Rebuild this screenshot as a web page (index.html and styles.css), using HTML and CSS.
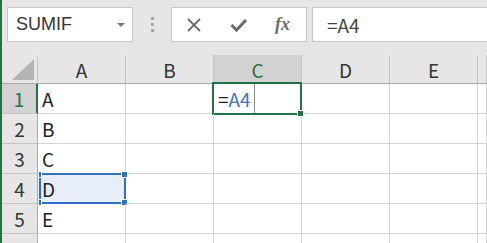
FILE: index.html
```html
<!DOCTYPE html>
<html lang="ja">
<head>
  <meta charset="UTF-8">
  <title>Sheet</title>
  <link rel="stylesheet" href="styles.css">
</head>
<body>
  <div class="app">
    <div class="toolbar">
      <div class="namebox">
        <span>SUMIF</span>
        <span class="caret"></span>
      </div>
      <div class="grip"><i></i><i></i><i></i></div>
      <div class="fbuttons">
        <svg width="16" height="16" viewBox="0 0 16 16"><path d="M2 2 L14 14 M14 2 L2 14" stroke="#6b6b6b" stroke-width="1.8" fill="none"/></svg>
        <svg width="18" height="16" viewBox="0 0 18 16"><path d="M1.5 8 L6.5 13 L16 3" stroke="#6b6b6b" stroke-width="3" fill="none"/></svg>
        <span class="fx">fx</span>
      </div>
      <div class="fbar">=A4</div>
    </div>

    <div class="sheet">
      <div class="hd corner"><span class="tri"></span></div>
      <div class="hd col">A</div>
      <div class="hd col">B</div>
      <div class="hd col on">C</div>
      <div class="hd col">D</div>
      <div class="hd col">E</div>
      <div class="hd col"></div>

      <div class="hd row on">1</div>
      <div class="cell">A</div>
      <div class="cell"></div>
      <div class="cell active"><span>=</span><span class="ref">A4</span><span class="cursor"></span><i class="fill"></i></div>
      <div class="cell"></div>
      <div class="cell"></div>
      <div class="cell"></div>

      <div class="hd row">2</div>
      <div class="cell">B</div>
      <div class="cell"></div>
      <div class="cell"></div>
      <div class="cell"></div>
      <div class="cell"></div>
      <div class="cell"></div>

      <div class="hd row">3</div>
      <div class="cell">C</div>
      <div class="cell"></div>
      <div class="cell"></div>
      <div class="cell"></div>
      <div class="cell"></div>
      <div class="cell"></div>

      <div class="hd row">4</div>
      <div class="cell picked">D<span class="sel"><i class="h tl"></i><i class="h tr"></i><i class="h bl"></i><i class="h br"></i></span></div>
      <div class="cell"></div>
      <div class="cell"></div>
      <div class="cell"></div>
      <div class="cell"></div>
      <div class="cell"></div>

      <div class="hd row">5</div>
      <div class="cell">E</div>
      <div class="cell"></div>
      <div class="cell"></div>
      <div class="cell"></div>
      <div class="cell"></div>
      <div class="cell"></div>

      <div class="hd row"></div>
      <div class="cell"></div>
      <div class="cell"></div>
      <div class="cell"></div>
      <div class="cell"></div>
      <div class="cell"></div>
      <div class="cell"></div>
    </div>
  </div>
</body>
</html>
```

FILE: styles.css
```css
body {
  margin: 0;
  font-family: "Noto Sans CJK JP", "Liberation Sans", sans-serif;
  color: #222;
  overflow: hidden;
}
.app {
  border-left: 2px solid #217346;
  height: 243px;
  overflow: hidden;
  background: #fff;
}

/* formula toolbar */
.toolbar {
  height: 55px;
  box-sizing: border-box;
  background: #e6e6e6;
  padding: 7px 0 0 5px;
  display: flex;
  align-items: flex-start;
}
.namebox {
  width: 126px;
  height: 35px;
  box-sizing: border-box;
  background: #fff;
  border: 1px solid #c6c6c6;
  display: flex;
  align-items: center;
  justify-content: space-between;
  padding: 0 7px 0 8px;
  font-family: "Liberation Sans", sans-serif;
  font-size: 18px;
  color: #333;
}
.caret {
  width: 0;
  height: 0;
  border-left: 4px solid transparent;
  border-right: 4px solid transparent;
  border-top: 4px solid #777;
}
.grip {
  width: 38px;
  height: 35px;
  display: flex;
  flex-direction: column;
  align-items: center;
  justify-content: center;
  gap: 3px;
}
.grip i {
  width: 3px;
  height: 3px;
  background: #a6a6a6;
}
.fbuttons {
  width: 136px;
  height: 35px;
  box-sizing: border-box;
  background: #fff;
  border: 1px solid #c6c6c6;
  display: flex;
  align-items: center;
  gap: 28px;
  padding-left: 14px;
}
.fx {
  font-family: "Liberation Serif", serif;
  font-style: italic;
  font-weight: bold;
  font-size: 18px;
  color: #6b6b6b;
  margin-left: -1px;
}
.fbar {
  flex: 1;
  height: 35px;
  box-sizing: border-box;
  margin-left: 5px;
  margin-right: -2px;
  background: #fff;
  border: 1px solid #c6c6c6;
  display: flex;
  align-items: center;
  padding-left: 14px;
  font-size: 19px;
  color: #444;
}

/* grid */
.sheet {
  display: grid;
  grid-template-columns: 36px repeat(5, 88px) 1fr;
  grid-template-rows: 29px repeat(6, 30px);
}
.sheet > div {
  box-sizing: border-box;
  border-right: 1px solid #d4d4d4;
  border-bottom: 1px solid #d4d4d4;
  font-size: 19px;
  display: flex;
  align-items: center;
  position: relative;
}
.sheet > .hd {
  background: #e6e6e6;
  border-right-color: #c4c4c4;
  border-bottom-color: #c4c4c4;
  justify-content: center;
  color: #333;
}
.sheet > .col {
  border-bottom-color: #ababab;
}
.sheet > .row {
  border-right-color: #ababab;
}
.sheet > .hd.on {
  background: #d2d2d2;
  color: #217346;
}
.sheet > .row.on {
  border-right: 2px solid #217346;
}
.corner {
  border-bottom-color: #ababab !important;
}
.tri {
  position: absolute;
  right: 3px;
  bottom: 3px;
  width: 22px;
  height: 21px;
  background: #b4b4b4;
  clip-path: polygon(100% 0, 100% 100%, 0 100%);
}
.cell {
  padding-left: 4px;
}
.ref {
  color: #4472c4;
}
.cursor {
  width: 1px;
  height: 100%;
  background: #8a8a8a;
  margin-left: 3px;
}
.active::after {
  content: "";
  position: absolute;
  top: -2px;
  left: -2px;
  right: -1px;
  bottom: -2px;
  border: 2px solid #217346;
}
.fill {
  position: absolute;
  right: -3px;
  bottom: -4px;
  width: 5px;
  height: 5px;
  background: #217346;
  border: 1px solid #fff;
  z-index: 2;
}
.picked {
  background: #e8eef9;
}
.sel {
  position: absolute;
  top: -1px;
  left: 1px;
  right: -1px;
  bottom: -1px;
  border: 2px solid #2f6fc6;
}
.h {
  position: absolute;
  width: 5px;
  height: 5px;
  background: #2f6fc6;
  border: 1px solid #fff;
}
.tl { top: -4px; left: -2px; width: 2px; border-left: 0; }
.bl { bottom: -4px; left: -2px; width: 2px; border-left: 0; }
.tr { top: -4px; right: -4px; }
.br { bottom: -4px; right: -4px; }
```
